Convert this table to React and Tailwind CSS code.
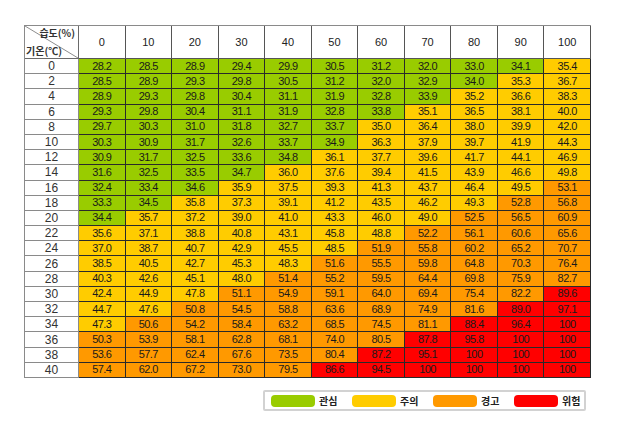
import React from "react";

const cols = [0, 10, 20, 30, 40, 50, 60, 70, 80, 90, 100];

const rows = [
  [0, [28.2, 28.5, 28.9, 29.4, 29.9, 30.5, 31.2, 32.0, 33.0, 34.1, 35.4]],
  [2, [28.5, 28.9, 29.3, 29.8, 30.5, 31.2, 32.0, 32.9, 34.0, 35.3, 36.7]],
  [4, [28.9, 29.3, 29.8, 30.4, 31.1, 31.9, 32.8, 33.9, 35.2, 36.6, 38.3]],
  [6, [29.3, 29.8, 30.4, 31.1, 31.9, 32.8, 33.8, 35.1, 36.5, 38.1, 40.0]],
  [8, [29.7, 30.3, 31.0, 31.8, 32.7, 33.7, 35.0, 36.4, 38.0, 39.9, 42.0]],
  [10, [30.3, 30.9, 31.7, 32.6, 33.7, 34.9, 36.3, 37.9, 39.7, 41.9, 44.3]],
  [12, [30.9, 31.7, 32.5, 33.6, 34.8, 36.1, 37.7, 39.6, 41.7, 44.1, 46.9]],
  [14, [31.6, 32.5, 33.5, 34.7, 36.0, 37.6, 39.4, 41.5, 43.9, 46.6, 49.8]],
  [16, [32.4, 33.4, 34.6, 35.9, 37.5, 39.3, 41.3, 43.7, 46.4, 49.5, 53.1]],
  [18, [33.3, 34.5, 35.8, 37.3, 39.1, 41.2, 43.5, 46.2, 49.3, 52.8, 56.8]],
  [20, [34.4, 35.7, 37.2, 39.0, 41.0, 43.3, 46.0, 49.0, 52.5, 56.5, 60.9]],
  [22, [35.6, 37.1, 38.8, 40.8, 43.1, 45.8, 48.8, 52.2, 56.1, 60.6, 65.6]],
  [24, [37.0, 38.7, 40.7, 42.9, 45.5, 48.5, 51.9, 55.8, 60.2, 65.2, 70.7]],
  [26, [38.5, 40.5, 42.7, 45.3, 48.3, 51.6, 55.5, 59.8, 64.8, 70.3, 76.4]],
  [28, [40.3, 42.6, 45.1, 48.0, 51.4, 55.2, 59.5, 64.4, 69.8, 75.9, 82.7]],
  [30, [42.4, 44.9, 47.8, 51.1, 54.9, 59.1, 64.0, 69.4, 75.4, 82.2, 89.6]],
  [32, [44.7, 47.6, 50.8, 54.5, 58.8, 63.6, 68.9, 74.9, 81.6, 89.0, 97.1]],
  [34, [47.3, 50.6, 54.2, 58.4, 63.2, 68.5, 74.5, 81.1, 88.4, 96.4, 100]],
  [36, [50.3, 53.9, 58.1, 62.8, 68.1, 74.0, 80.5, 87.8, 95.8, 100, 100]],
  [38, [53.6, 57.7, 62.4, 67.6, 73.5, 80.4, 87.2, 95.1, 100, 100, 100]],
  [40, [57.4, 62.0, 67.2, 73.0, 79.5, 86.6, 94.5, 100, 100, 100, 100]],
];

function bgFor(v) {
  if (v < 35) return "bg-[#99cc00]";
  if (v < 50) return "bg-[#ffcc00]";
  if (v < 85) return "bg-[#ff9900]";
  return "bg-[#ff0000]";
}

function fmt(v) {
  return v >= 100 ? "100" : v.toFixed(1);
}

const legend = [
  ["bg-[#99cc00]", "관심"],
  ["bg-[#ffcc00]", "주의"],
  ["bg-[#ff9900]", "경고"],
  ["bg-[#ff0000]", "위험"],
];

export default function App() {
  return (
    <div
      className="w-[637px] h-[430px] bg-white pl-[24px] pt-[25px]"
      style={{ fontFamily: '"Liberation Sans", "Noto Sans CJK KR", sans-serif' }}
    >
      <div className="grid w-[567px] h-[353px] grid-cols-[54px_repeat(11,1fr)] grid-rows-[33px_repeat(21,1fr)] border-l border-t border-[#8a8a8a]">
        <div className="relative flex flex-col justify-between px-[1px] pt-[2px] pb-[2px] border-r border-b border-[#6a6a6a] text-[10px] font-bold text-[#333] leading-none" style={{ fontFamily: '"Noto Sans CJK KR", "Liberation Sans", sans-serif' }}>
          <svg className="absolute inset-0 w-full h-full" viewBox="0 0 54 33" preserveAspectRatio="none">
            <line x1="0" y1="0" x2="54" y2="33" stroke="#8a8a8a" strokeWidth="1" />
          </svg>
          <span className="relative self-end pr-[2px]">습도(%)</span>
          <span className="relative self-start">기온(℃)</span>
        </div>
        {cols.map((c) => (
          <div
            key={c}
            className="flex items-center justify-center border-r border-b border-[#555] text-[11px] text-[#222] bg-white"
          >
            {c}
          </div>
        ))}
        {rows.map(([t, vals]) => (
          <React.Fragment key={t}>
            <div className="flex items-center justify-center border-r border-b border-[#8a8a8a] text-[12px] text-[#333] bg-white leading-none">
              {t}
            </div>
            {vals.map((v, i) => (
              <div
                key={i}
                className={`flex items-center justify-center border-r border-b border-[#2a2a2a] text-[11px] leading-none text-[#1a1a1a] tracking-[-0.05em] ${bgFor(v)}`}
              >
                {fmt(v)}
              </div>
            ))}
          </React.Fragment>
        ))}
      </div>
      <div className="ml-[239px] mt-[12px] w-[323px] h-[21px] border-2 border-[#d2d2d2] rounded-[2px] flex items-center pl-[6px]">
        {legend.map(([bg, label], i) => (
          <div key={label} className={`flex items-center gap-[4px] ${i < 3 ? "w-[81px]" : ""}`}>
            <div className={`w-[44px] h-[12px] rounded-[4px] ${bg}`} />
            <span
              className="text-[10px] font-bold text-[#222] leading-none"
              style={{ fontFamily: '"Noto Sans CJK KR", "Liberation Sans", sans-serif' }}
            >
              {label}
            </span>
          </div>
        ))}
      </div>
    </div>
  );
}
